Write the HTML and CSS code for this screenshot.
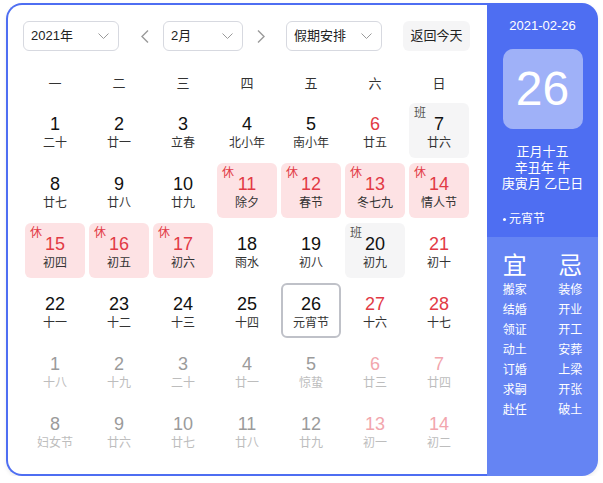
FILE: index.html
```html
<!DOCTYPE html>
<html lang="zh">
<head>
<meta charset="utf-8">
<title>万年历</title>
<link rel="stylesheet" href="styles.css">
</head>
<body>
<div class="card">
  <div class="main">
    <div class="toolbar">
      <div class="select sel-year"><span>2021年</span><svg class="chev" width="11" height="6" viewBox="0 0 11 6"><polyline points="0.5,0.5 5.5,5.5 10.5,0.5" fill="none" stroke="#9a9a9a" stroke-width="1"/></svg></div>
      <svg class="arrow prev" width="8" height="13" viewBox="0 0 8 13"><polyline points="7,0.5 1,6.5 7,12.5" fill="none" stroke="#9a9a9a" stroke-width="1.4"/></svg>
      <div class="select sel-month"><span>2月</span><svg class="chev" width="11" height="6" viewBox="0 0 11 6"><polyline points="0.5,0.5 5.5,5.5 10.5,0.5" fill="none" stroke="#9a9a9a" stroke-width="1"/></svg></div>
      <svg class="arrow next" width="8" height="13" viewBox="0 0 8 13"><polyline points="1,0.5 7,6.5 1,12.5" fill="none" stroke="#9a9a9a" stroke-width="1.4"/></svg>
      <div class="select sel-hol"><span>假期安排</span><svg class="chev" width="11" height="6" viewBox="0 0 11 6"><polyline points="0.5,0.5 5.5,5.5 10.5,0.5" fill="none" stroke="#9a9a9a" stroke-width="1"/></svg></div>
      <div class="today-btn">返回今天</div>
    </div>
    <div class="weekdays">
      <span>一</span><span>二</span><span>三</span><span>四</span><span>五</span><span>六</span><span>日</span>
    </div>
    <div class="grid">
      <div class="cell"><span class="num">1</span><span class="lunar">二十</span></div>
      <div class="cell"><span class="num">2</span><span class="lunar">廿一</span></div>
      <div class="cell"><span class="num">3</span><span class="lunar">立春</span></div>
      <div class="cell"><span class="num">4</span><span class="lunar">北小年</span></div>
      <div class="cell"><span class="num">5</span><span class="lunar">南小年</span></div>
      <div class="cell wkd"><span class="num">6</span><span class="lunar">廿五</span></div>
      <div class="cell work"><span class="tag">班</span><span class="num">7</span><span class="lunar">廿六</span></div>

      <div class="cell"><span class="num">8</span><span class="lunar">廿七</span></div>
      <div class="cell"><span class="num">9</span><span class="lunar">廿八</span></div>
      <div class="cell"><span class="num">10</span><span class="lunar">廿九</span></div>
      <div class="cell hol"><span class="tag">休</span><span class="num">11</span><span class="lunar">除夕</span></div>
      <div class="cell hol"><span class="tag">休</span><span class="num">12</span><span class="lunar">春节</span></div>
      <div class="cell hol"><span class="tag">休</span><span class="num">13</span><span class="lunar">冬七九</span></div>
      <div class="cell hol"><span class="tag">休</span><span class="num">14</span><span class="lunar">情人节</span></div>

      <div class="cell hol"><span class="tag">休</span><span class="num">15</span><span class="lunar">初四</span></div>
      <div class="cell hol"><span class="tag">休</span><span class="num">16</span><span class="lunar">初五</span></div>
      <div class="cell hol"><span class="tag">休</span><span class="num">17</span><span class="lunar">初六</span></div>
      <div class="cell"><span class="num">18</span><span class="lunar">雨水</span></div>
      <div class="cell"><span class="num">19</span><span class="lunar">初八</span></div>
      <div class="cell work"><span class="tag">班</span><span class="num">20</span><span class="lunar">初九</span></div>
      <div class="cell wkd"><span class="num">21</span><span class="lunar">初十</span></div>

      <div class="cell"><span class="num">22</span><span class="lunar">十一</span></div>
      <div class="cell"><span class="num">23</span><span class="lunar">十二</span></div>
      <div class="cell"><span class="num">24</span><span class="lunar">十三</span></div>
      <div class="cell"><span class="num">25</span><span class="lunar">十四</span></div>
      <div class="cell today"><span class="num">26</span><span class="lunar">元宵节</span></div>
      <div class="cell wkd"><span class="num">27</span><span class="lunar">十六</span></div>
      <div class="cell wkd"><span class="num">28</span><span class="lunar">十七</span></div>

      <div class="cell other"><span class="num">1</span><span class="lunar">十八</span></div>
      <div class="cell other"><span class="num">2</span><span class="lunar">十九</span></div>
      <div class="cell other"><span class="num">3</span><span class="lunar">二十</span></div>
      <div class="cell other"><span class="num">4</span><span class="lunar">廿一</span></div>
      <div class="cell other"><span class="num">5</span><span class="lunar">惊蛰</span></div>
      <div class="cell other wkd"><span class="num">6</span><span class="lunar">廿三</span></div>
      <div class="cell other wkd"><span class="num">7</span><span class="lunar">廿四</span></div>

      <div class="cell other"><span class="num">8</span><span class="lunar">妇女节</span></div>
      <div class="cell other"><span class="num">9</span><span class="lunar">廿六</span></div>
      <div class="cell other"><span class="num">10</span><span class="lunar">廿七</span></div>
      <div class="cell other"><span class="num">11</span><span class="lunar">廿八</span></div>
      <div class="cell other"><span class="num">12</span><span class="lunar">廿九</span></div>
      <div class="cell other wkd"><span class="num">13</span><span class="lunar">初一</span></div>
      <div class="cell other wkd"><span class="num">14</span><span class="lunar">初二</span></div>
    </div>
  </div>
  <div class="side">
    <div class="side-top">
      <div class="date">2021-02-26</div>
      <div class="bigday">26</div>
      <div class="lunar-info">
        <div>正月十五</div>
        <div>辛丑年 牛</div>
        <div>庚寅月 乙巳日</div>
      </div>
      <div class="festival"><span class="dot"></span>元宵节</div>
    </div>
    <div class="side-bottom">
      <div class="col">
        <div class="head">宜</div>
        <div>搬家</div><div>结婚</div><div>领证</div><div>动土</div><div>订婚</div><div>求嗣</div><div>赴任</div>
      </div>
      <div class="col">
        <div class="head">忌</div>
        <div>装修</div><div>开业</div><div>开工</div><div>安葬</div><div>上梁</div><div>开张</div><div>破土</div>
      </div>
    </div>
  </div>
</div>
</body>
</html>
```

FILE: styles.css
```css
* { box-sizing: border-box; }
html, body { margin: 0; padding: 0; background: #fff; }
body {
  font-family: "Liberation Sans", "Noto Sans CJK SC", sans-serif;
  color: #333;
  padding: 3px 5px 0 6px;
}
.card {
  display: flex;
  width: 592px;
  height: 473px;
  border-radius: 16px;
  box-shadow: 0 2px 4px rgba(0, 0, 0, 0.08);
}
.main {
  width: 481px;
  height: 100%;
  border: 2px solid #4e6ef2;
  border-right: none;
  border-radius: 16px 0 0 16px;
  padding: 16px 0 0 15px;
  background: #fff;
}
.toolbar {
  display: flex;
  align-items: center;
  height: 30px;
}
.select {
  display: flex;
  align-items: center;
  justify-content: space-between;
  height: 30px;
  border: 1px solid #d7d9e0;
  border-radius: 6px;
  padding: 0 9px 0 7px;
  font-size: 13px;
  line-height: 18px;
  color: #222;
}
.sel-year { width: 96px; }
.sel-month { width: 80px; }
.sel-hol { width: 96px; }
.arrow.prev { margin: 0 14px 0 22px; }
.arrow.next { margin: 0 21px 0 14px; }
.today-btn {
  margin-left: 21px;
  width: 67px;
  height: 30px;
  border-radius: 6px;
  background: #f5f5f6;
  font-size: 13px;
  line-height: 30px;
  text-align: center;
  color: #222;
}
.weekdays {
  display: grid;
  grid-template-columns: repeat(7, 60px);
  column-gap: 4px;
  margin: 15px 0 0 2px;
  height: 36px;
  align-items: center;
  font-size: 13px;
  line-height: 18px;
  text-align: center;
  color: #333;
}
.grid {
  display: grid;
  grid-template-columns: repeat(7, 60px);
  grid-auto-rows: 55px;
  column-gap: 4px;
  row-gap: 5px;
  margin: 1px 0 0 2px;
}
.cell {
  position: relative;
  border-radius: 6px;
  padding-top: 11px;
  text-align: center;
}
.num {
  display: block;
  font-size: 18px;
  line-height: 20px;
  color: #111;
}
.lunar {
  display: block;
  font-size: 12px;
  line-height: 18px;
  color: #333;
}
.tag {
  position: absolute;
  left: 5px;
  top: 2px;
  font-size: 12px;
  line-height: 16px;
}
.hol { background: #fde2e4; }
.hol .tag, .hol .num { color: #e23a45; }
.work { background: #f5f5f6; }
.work .tag { color: #555; }
.wkd .num { color: #e23a45; }
.today {
  border: 2px solid #bfc1c8;
  padding-top: 9px;
}
.other .num { color: #9b9b9b; }
.other .lunar { color: #bdbdbd; }
.other.wkd .num { color: #f2a6ad; }

.side {
  width: 111px;
  height: 100%;
  border-radius: 0 16px 16px 0;
  overflow: hidden;
  display: flex;
  flex-direction: column;
  color: #fff;
}
.side-top {
  height: 234px;
  background: #4e6ef2;
  padding-top: 15px;
  text-align: center;
}
.date {
  font-size: 13px;
  line-height: 16px;
}
.bigday {
  width: 80px;
  height: 80px;
  margin: 15px auto 0;
  border-radius: 10px;
  background: #9fb1f8;
  font-size: 48px;
  line-height: 80px;
}
.lunar-info {
  margin-top: 15px;
  font-size: 13px;
  line-height: 16px;
}
.festival {
  margin-top: 19px;
  padding-left: 16px;
  text-align: left;
  font-size: 12px;
  line-height: 16px;
  display: flex;
  align-items: center;
}
.dot {
  width: 3px;
  height: 3px;
  border-radius: 50%;
  background: #fff;
  margin-right: 3px;
}
.side-bottom {
  flex: 1;
  background: #6584f3;
  display: grid;
  grid-template-columns: 1fr 1fr;
  padding-top: 15px;
  text-align: center;
  font-size: 12px;
  line-height: 20px;
}
.head {
  font-size: 24px;
  line-height: 28px;
}
```
